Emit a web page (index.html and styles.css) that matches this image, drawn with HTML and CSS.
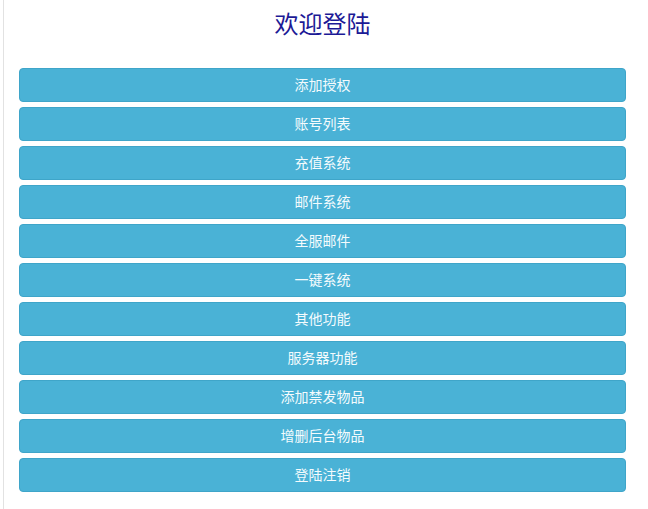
FILE: index.html
```html
<!DOCTYPE html>
<html lang="zh">
<head>
<meta charset="utf-8">
<title>欢迎登陆</title>
<link rel="stylesheet" href="styles.css">
</head>
<body>
<div class="page">
  <h1 class="title">欢迎登陆</h1>
  <div class="menu">
    <a class="btn">添加授权</a>
    <a class="btn">账号列表</a>
    <a class="btn">充值系统</a>
    <a class="btn">邮件系统</a>
    <a class="btn">全服邮件</a>
    <a class="btn">一键系统</a>
    <a class="btn">其他功能</a>
    <a class="btn">服务器功能</a>
    <a class="btn">添加禁发物品</a>
    <a class="btn">增删后台物品</a>
    <a class="btn">登陆注销</a>
  </div>
</div>
</body>
</html>
```
FILE: styles.css
```css
html, body {
  margin: 0;
  padding: 0;
  background: #fff;
}
body {
  font-family: "Noto Sans CJK SC", "Liberation Sans", sans-serif;
  padding-left: 3px;
}
.page {
  border-left: 1px solid #e2e2e2;
  min-height: 509px;
  box-sizing: border-box;
  padding: 8px 22px 0 15px;
}
.title {
  margin: 0;
  text-align: center;
  font-size: 24px;
  font-weight: normal;
  color: #1c1a96;
  line-height: 30px;
  height: 30px;
  margin-bottom: 30px;
}
.menu {
  display: flex;
  flex-direction: column;
  gap: 5px;
}
.btn {
  display: flex;
  align-items: center;
  justify-content: center;
  height: 34px;
  box-sizing: border-box;
  padding-bottom: 2px;
  background: #4ab2d6;
  border: 1px solid #3fa5c9;
  border-radius: 4px;
  color: #f4fbfd;
  font-size: 14px;
  text-decoration: none;
}
```
